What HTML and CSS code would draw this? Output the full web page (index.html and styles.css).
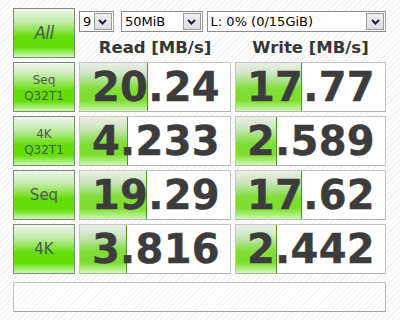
FILE: index.html
```html
<!DOCTYPE html>
<html>
<head>
<meta charset="utf-8">
<link rel="stylesheet" href="styles.css">
</head>
<body>
<div class="app">
  <div class="grid">
    <div class="btn all">All</div>
    <div class="head">
      <div class="selects">
        <div class="sel s1"><span class="val">9</span><span class="arr"><svg width="9" height="6" viewBox="0 0 9 6"><path d="M1 1 L4.5 4.5 L8 1" fill="none" stroke="#1a2040" stroke-width="2"/></svg></span></div>
        <div class="sel s2"><span class="val">50MiB</span><span class="arr"><svg width="9" height="6" viewBox="0 0 9 6"><path d="M1 1 L4.5 4.5 L8 1" fill="none" stroke="#1a2040" stroke-width="2"/></svg></span></div>
        <div class="sel s3"><span class="val">L: 0% (0/15GiB)</span><span class="arr"><svg width="9" height="6" viewBox="0 0 9 6"><path d="M1 1 L4.5 4.5 L8 1" fill="none" stroke="#1a2040" stroke-width="2"/></svg></span></div>
      </div>
      <div class="titles">
        <div class="title">Read [MB/s]</div>
        <div class="title">Write [MB/s]</div>
      </div>
    </div>

    <div class="btn two">Seq<br>Q32T1</div>
    <div class="cell"><div class="bar" style="width:68px"></div><span class="num">20.24</span></div>
    <div class="cell"><div class="bar" style="width:66px"></div><span class="num">17.77</span></div>

    <div class="btn two">4K<br>Q32T1</div>
    <div class="cell"><div class="bar" style="width:48px"></div><span class="num">4.233</span></div>
    <div class="cell"><div class="bar" style="width:41px"></div><span class="num">2.589</span></div>

    <div class="btn one">Seq</div>
    <div class="cell"><div class="bar" style="width:67px"></div><span class="num">19.29</span></div>
    <div class="cell"><div class="bar" style="width:66px"></div><span class="num">17.62</span></div>

    <div class="btn one">4K</div>
    <div class="cell"><div class="bar" style="width:47px"></div><span class="num">3.816</span></div>
    <div class="cell"><div class="bar" style="width:41px"></div><span class="num">2.442</span></div>
  </div>
  <div class="comment"></div>
</div>
</body>
</html>
```
FILE: styles.css
```css
html, body {
  margin: 0;
  padding: 0;
}
body {
  width: 400px;
  height: 320px;
  overflow: hidden;
  font-family: "DejaVu Sans", Verdana, sans-serif;
  background: repeating-linear-gradient(135deg, #fdfdfd 0px, #fdfdfd 3px, #f1f1f1 3px, #f1f1f1 4px);
}
.app {
  padding: 8px 14px 0 13px;
}
.grid {
  display: grid;
  grid-template-columns: 62px 152px 151px;
  grid-auto-rows: 50px;
  gap: 4px;
}
.btn {
  box-sizing: border-box;
  border: 1px solid #7b8c78;
  background: linear-gradient(to bottom, #f2f5f0 0%, #c4ecae 25%, #8ee44c 45%, #62de06 58%, #62de06 80%, #a6ee74 92%, #d0f6b4 100%);
  color: #4d5a4c;
  display: flex;
  align-items: center;
  justify-content: center;
  text-align: center;
}
.all {
  font-size: 17px;
  font-style: italic;
  letter-spacing: -0.5px;
}
.two {
  font-size: 12px;
  line-height: 16px;
  padding-top: 1px;
}
.one {
  font-size: 15px;
}
.head {
  grid-column: 2 / 4;
  display: flex;
  flex-direction: column;
}
.selects {
  display: flex;
  margin-top: 3px;
  height: 21px;
}
.sel {
  box-sizing: border-box;
  height: 21px;
  border: 1px solid #8a8a8a;
  border-right-color: #a0a0a0;
  background: #fff;
  display: flex;
  align-items: stretch;
  font-size: 13px;
  color: #000;
}
.s1 { width: 35px; }
.s2 { width: 82px; margin-left: 7px; }
.s3 { width: 180px; margin-left: 4px; }
.val {
  flex: 1;
  padding-left: 3px;
  line-height: 19px;
  white-space: nowrap;
  overflow: hidden;
}
.arr {
  width: 18px;
  box-sizing: border-box;
  border: 1px solid #9a9a9a;
  margin: 1px;
  background: linear-gradient(to bottom, #f0f0f0, #dcdcdc);
  display: flex;
  align-items: center;
  justify-content: center;
}
.titles {
  display: grid;
  grid-template-columns: 152px 151px;
  gap: 4px;
  margin-top: 6px;
}
.title {
  text-align: center;
  font-weight: bold;
  font-size: 16.5px;
  line-height: 20px;
  color: #363636;
}
.cell {
  position: relative;
  box-sizing: border-box;
  border: 1px solid #c6c6c6;
  border-bottom-color: #b4b4b4;
  background: #fff;
  display: flex;
  align-items: center;
  justify-content: flex-end;
  padding-right: 10px;
}
.bar {
  position: absolute;
  left: 0;
  top: 0;
  bottom: 0;
  box-sizing: border-box;
  border-right: 1px solid #3f9a22;
  background: linear-gradient(to bottom, #ebeee9 0%, #cfe6c2 22%, #9ee071 42%, #80de36 55%, #7edd2e 78%, #a8ec78 90%, #d2f6b8 100%);
}
.num {
  position: relative;
  font-weight: bold;
  font-size: 40px;
  line-height: 48px;
  color: #3c3c3c;
  letter-spacing: 0.3px;
  -webkit-text-stroke: 0.4px #3c3c3c;
}
.comment {
  box-sizing: border-box;
  margin-top: 8px;
  height: 30px;
  border: 1px solid #c4c4c4;
  border-bottom-color: #a2a2a2;
  border-right-color: #b8b8b8;
  background: repeating-linear-gradient(135deg, #ffffff 0px, #ffffff 3px, #f6f6f6 3px, #f6f6f6 4px);
}
```
